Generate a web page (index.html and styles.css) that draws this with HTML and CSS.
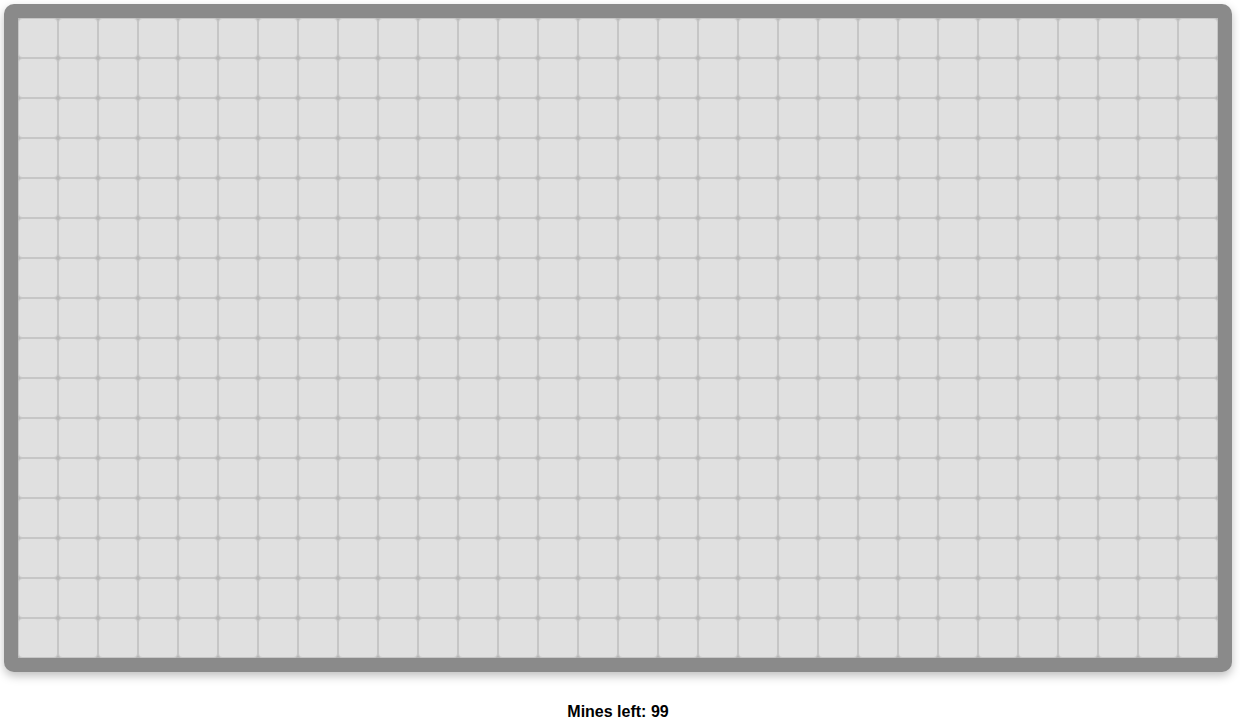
FILE: index.html
```html
<!DOCTYPE html>
<html>
<head>
<meta charset="utf-8">
<link rel="stylesheet" href="styles.css">
</head>
<body>
<div class="page">
  <div class="game">
    <div class="board">
      <div class="grid" id="grid"></div>
    </div>
    <div class="status">Mines left: 99</div>
  </div>
</div>
<script>
  var g = document.getElementById('grid');
  var html = '';
  for (var i = 0; i < 30 * 16; i++) html += '<div class="cell"></div>';
  g.innerHTML = html;
</script>
</body>
</html>
```
FILE: styles.css
```css
html, body {
  margin: 0;
  padding: 0;
  background: #fff;
  font-family: "Liberation Sans", Arial, sans-serif;
}
.page {
  padding: 4px;
  display: flex;
  align-items: flex-start;
}
.game {
  display: flex;
  flex-direction: column;
  align-items: center;
}
.board {
  background: #8a8a8a;
  border-radius: 10px;
  padding: 14px;
  box-shadow: 0 4px 10px rgba(0, 0, 0, 0.25);
}
.grid {
  display: grid;
  grid-template-columns: repeat(30, 40px);
  grid-template-rows: repeat(16, 40px);
  background: #b8b8b8;
}
.cell {
  box-sizing: border-box;
  background: #e0e0e0;
  border: 1px solid #c6c6c6;
  border-radius: 4px;
}
.status {
  margin-top: 31px;
  font-weight: bold;
  font-size: 16px;
  color: #000;
}
```
